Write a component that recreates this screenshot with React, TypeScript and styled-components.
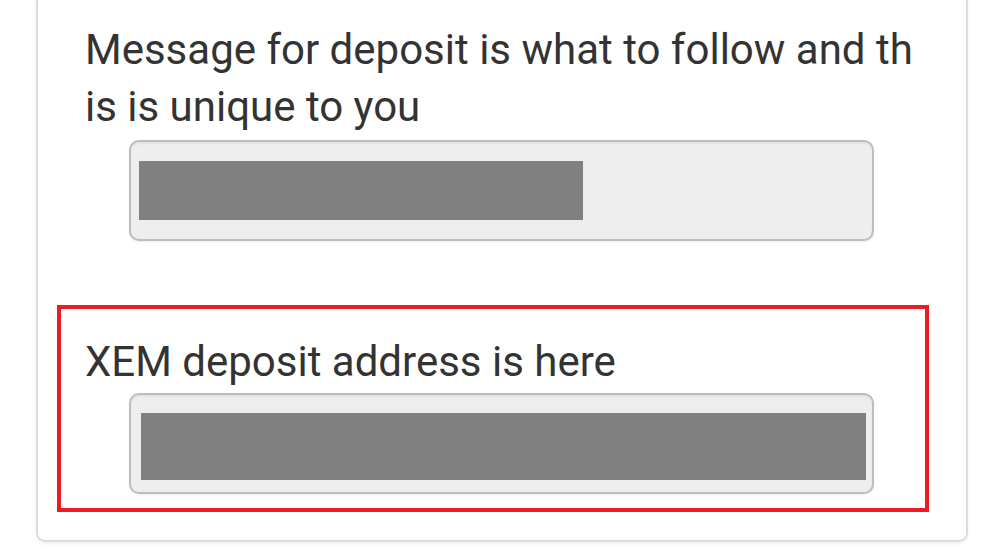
import React from 'react'
import styled, { createGlobalStyle } from 'styled-components'

const GlobalStyle = createGlobalStyle`
    html, body {
        margin: 0;
        padding: 0;
        background: #ffffff;
    }
    body {
        font-family: Roboto, "Noto Sans", "Liberation Sans", sans-serif;
        color: #333333;
    }
`

const Page = styled.main`
    display: flex;
    width: 998px;
    height: 557px;
    padding-left: 36px;
    box-sizing: border-box;
    overflow: hidden;
`

const Card = styled.section`
    display: flex;
    flex-direction: column;
    gap: 60px;
    width: 932px;
    align-self: flex-start;
    padding: 17px 37px 28px 19px;
    box-sizing: border-box;
    border: 2px solid #dcdcdc;
    border-top: none;
    border-radius: 0 0 9px 9px;
    box-shadow: 0 2px 3px rgba(0, 0, 0, 0.06);
    background: #ffffff;
`

const Field = styled.div<{ $highlight?: boolean }>`
    display: flex;
    flex-direction: column;
    padding: ${(p) => (p.$highlight ? '24px 24px 14px' : '0 24px')};
    border: 4px solid ${(p) => (p.$highlight ? '#ed1c24' : 'transparent')};
`

const Label = styled.div`
    font-size: 42px;
    line-height: 57px;
    color: #333333;
    white-space: nowrap;
`

const InputBox = styled.div<{ $padLeft: number; $gap: number }>`
    display: flex;
    align-items: center;
    width: 745px;
    height: 101px;
    margin: ${(p) => p.$gap}px 0 0 44px;
    padding-left: ${(p) => p.$padLeft}px;
    box-sizing: border-box;
    background: #eeeeee;
    border: 2px solid #bdbdbd;
    border-radius: 10px;
    box-shadow: inset 0 2px 2px rgba(0, 0, 0, 0.05), 0 1px 2px rgba(0, 0, 0, 0.08);
`

const Redacted = styled.div<{ $width: number; $height: number; $shift?: number }>`
    width: ${(p) => p.$width}px;
    height: ${(p) => p.$height}px;
    margin-top: ${(p) => p.$shift ?? 0}px;
    background: #808080;
`

const App = () => {
    return (
        <Page>
            <GlobalStyle />
            <Card>
                <Field>
                    <Label>
                        Message for deposit is what to follow and th
                        <br />
                        is is unique to you
                    </Label>
                    <InputBox $padLeft={8} $gap={5}>
                        <Redacted $width={444} $height={59} />
                    </InputBox>
                </Field>
                <Field $highlight>
                    <Label>XEM deposit address is here</Label>
                    <InputBox $padLeft={10} $gap={3}>
                        <Redacted $width={725} $height={67} $shift={6} />
                    </InputBox>
                </Field>
            </Card>
        </Page>
    )
}

export default App
